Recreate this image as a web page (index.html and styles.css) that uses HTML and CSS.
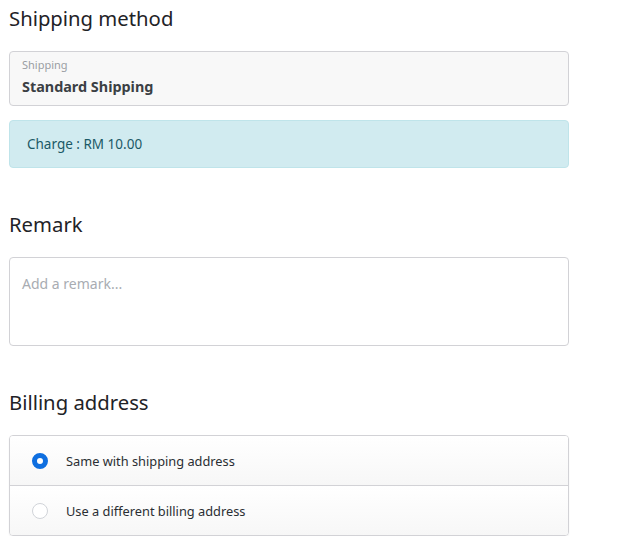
FILE: index.html
```html
<!DOCTYPE html>
<html>
<head>
<meta charset="utf-8">
<link rel="stylesheet" href="styles.css">
</head>
<body>
<div class="page">
  <h2 class="title">Shipping method</h2>
  <div class="select-box">
    <div class="select-label">Shipping</div>
    <div class="select-value">Standard Shipping</div>
  </div>
  <div class="alert">Charge : RM 10.00</div>

  <h2 class="title section">Remark</h2>
  <textarea class="remark" placeholder="Add a remark..."></textarea>

  <h2 class="title section">Billing address</h2>
  <div class="options">
    <label class="option">
      <span class="radio checked"></span>
      <span class="option-text">Same with shipping address</span>
    </label>
    <label class="option">
      <span class="radio"></span>
      <span class="option-text">Use a different billing address</span>
    </label>
  </div>
</div>
</body>
</html>
```

FILE: styles.css
```css
* { box-sizing: border-box; }
html, body { margin: 0; padding: 0; background: #fff; }
body {
  font-family: "Noto Sans", "Open Sans", sans-serif;
  color: #212529;
}
.page {
  width: 578px;
  padding: 0 9px;
}
.title {
  margin: 0;
  font-size: 20.3px;
  font-weight: 400;
  line-height: 36px;
  color: #1f2327;
}
.section { margin-top: 38px; }
.select-box {
  margin-top: 15px;
  height: 55px;
  border: 1px solid #d2d2d6;
  border-radius: 4px;
  background: #f8f8f8;
  padding: 5px 12px 0;
}
.select-label {
  font-size: 11px;
  line-height: 16px;
  color: #9a9ea3;
}
.select-value {
  font-size: 14.4px;
  font-weight: 700;
  line-height: 28px;
  color: #3b3f44;
}
.alert {
  margin-top: 14px;
  height: 48px;
  border: 1px solid #bfe4ea;
  border-radius: 4px;
  background: #d1ebf0;
  color: #1b5966;
  font-size: 13.5px;
  line-height: 46px;
  padding: 0 17px;
}
.remark {
  display: block;
  margin-top: 15px;
  width: 100%;
  height: 89px;
  border: 1px solid #d2d2d6;
  border-radius: 4px;
  padding: 16px 12px;
  font-family: inherit;
  font-size: 14px;
  resize: none;
  outline: none;
}
.remark::placeholder { color: #a8acb2; }
.options {
  margin-top: 15px;
  border: 1px solid #d2d2d6;
  border-radius: 4px;
  overflow: hidden;
  box-shadow: 0 1px 2px rgba(0,0,0,0.06);
}
.option {
  display: flex;
  align-items: center;
  height: 49px;
  padding-left: 22px;
  background: linear-gradient(#ffffff, #f7f7f7);
}
.option + .option { border-top: 1px solid #d2d2d6; height: 50px; }
.radio {
  width: 16px;
  height: 16px;
  border-radius: 50%;
  border: 1px solid #d0d3d8;
  background: #fff;
  flex: none;
}
.radio.checked {
  border: 5px solid #0f6fe0;
  background: #fff;
}
.option-text {
  margin-left: 18px;
  font-size: 12.8px;
  color: #2a2e33;
}
```
